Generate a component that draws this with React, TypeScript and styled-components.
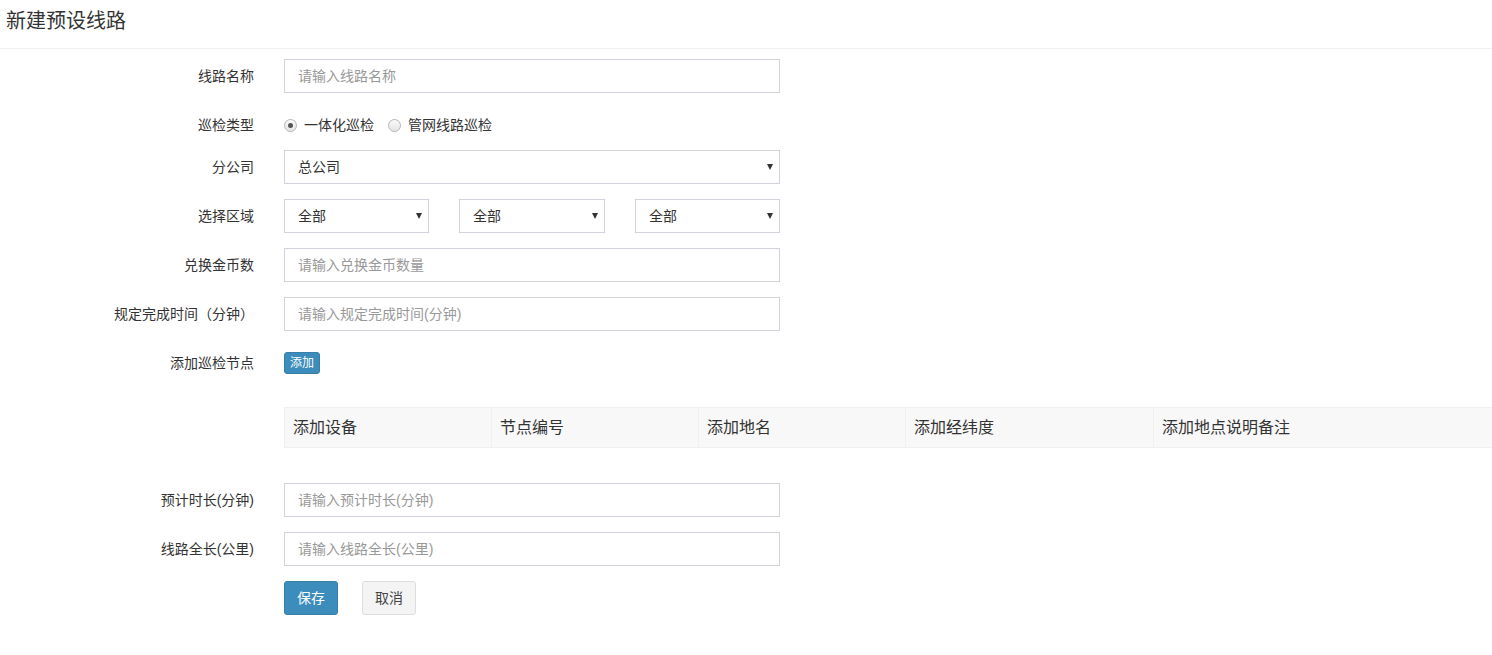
import React from "react";
import styled, { createGlobalStyle } from "styled-components";

const GlobalStyle = createGlobalStyle`
  html, body {
    margin: 0;
    padding: 0;
    background: #fff;
  }
  body {
    font-family: "Liberation Sans", "Noto Sans CJK SC", sans-serif;
    font-size: 14px;
    line-height: 20px;
    color: #333;
  }
  * { box-sizing: border-box; }
`;

const Page = styled.div`
  width: 1492px;
  min-height: 655px;
  background: #fff;
`;

const Header = styled.div`
  height: 49px;
  padding: 7px 6px 0;
  border-bottom: 1px solid #f0f0f0;
`;

const Title = styled.h1`
  margin: 0;
  font-size: 20px;
  font-weight: normal;
  line-height: 28px;
  color: #333;
`;

const Form = styled.form`
  display: flex;
  flex-direction: column;
  padding-top: 10px;
`;

const Group = styled.div`
  display: flex;
  align-items: center;
  height: 34px;
  margin-bottom: 15px;
`;

const RadioRow = styled(Group)`
  height: 27px;
  align-items: flex-end;
`;

const Label = styled.label`
  width: 254px;
  margin-right: 30px;
  text-align: right;
  font-size: 14px;
  line-height: 20px;
  color: #333;
  flex-shrink: 0;
`;

const Control = styled.div`
  width: 496px;
`;

const Input = styled.input`
  display: block;
  width: 100%;
  height: 34px;
  padding: 6px 13px;
  border: 1px solid #d2d2dc;
  border-radius: 0;
  font-family: inherit;
  font-size: 14px;
  color: #555;
  outline: none;
  &::placeholder {
    color: #999;
  }
`;

const SelectWrap = styled.div`
  position: relative;
  width: 100%;
  &::after {
    content: "";
    position: absolute;
    right: 7px;
    top: 14px;
    border-left: 3.5px solid transparent;
    border-right: 3.5px solid transparent;
    border-top: 6px solid #333;
    pointer-events: none;
  }
`;

const Select = styled.select`
  display: block;
  width: 100%;
  height: 34px;
  padding: 0 13px;
  border: 1px solid #d2d2dc;
  border-radius: 0;
  background: #fff;
  font-family: inherit;
  font-size: 14px;
  color: #333;
  appearance: none;
  -webkit-appearance: none;
  outline: none;
`;

const TripleGrid = styled.div`
  display: grid;
  grid-template-columns: 145px 146px 145px;
  column-gap: 30px;
  width: 496px;
`;

const RadioGroup = styled.div`
  display: flex;
  align-items: center;
  height: 20px;
`;

const RadioOption = styled.label`
  display: flex;
  align-items: center;
  font-size: 14px;
  line-height: 20px;
  color: #333;
  margin-right: 14px;
  cursor: pointer;
`;

const RadioCircle = styled.span<{ $checked?: boolean }>`
  position: relative;
  width: 13px;
  height: 13px;
  border-radius: 50%;
  border: 1px solid #b5b5b5;
  background: linear-gradient(#fafafa, #e4e4e4);
  margin-right: 7px;
  flex-shrink: 0;
  &::after {
    content: "";
    display: ${(p) => (p.$checked ? "block" : "none")};
    position: absolute;
    left: 3px;
    top: 3px;
    width: 5px;
    height: 5px;
    border-radius: 50%;
    background: #555;
  }
`;

const Button = styled.button<{ $variant?: "primary" | "default"; $size?: "xs" | "md" }>`
  font-family: inherit;
  cursor: pointer;
  border-radius: 3px;
  border: 1px solid
    ${(p) => (p.$variant === "primary" ? "#367fa9" : "#ddd")};
  background: ${(p) => (p.$variant === "primary" ? "#3c8dbc" : "#f4f4f4")};
  color: ${(p) => (p.$variant === "primary" ? "#fff" : "#444")};
  font-size: ${(p) => (p.$size === "xs" ? "12px" : "14px")};
  height: ${(p) => (p.$size === "xs" ? "22px" : "34px")};
  width: ${(p) => (p.$size === "xs" ? "36px" : "54px")};
  padding: 0;
  line-height: 1;
`;

const ButtonRow = styled.div`
  display: flex;
  gap: 24px;
  margin-left: 284px;
`;

const TableWrap = styled.div`
  margin: 12px 0 35px 284px;
  width: 1208px;
`;

const Table = styled.table`
  width: 100%;
  border-collapse: collapse;
  table-layout: fixed;
`;

const Th = styled.th`
  height: 40px;
  padding: 0 8px;
  background: #f8f8f8;
  border: 1px solid #f0f0f0;
  text-align: left;
  font-size: 16px;
  font-weight: normal;
  color: #333;
`;

const columns = [
  { title: "添加设备", width: 207 },
  { title: "节点编号", width: 207 },
  { title: "添加地名", width: 207 },
  { title: "添加经纬度", width: 248 },
  { title: "添加地点说明备注", width: 339 },
];

export default function App() {
  return (
    <Page>
      <GlobalStyle />
      <Header>
        <Title>新建预设线路</Title>
      </Header>
      <Form onSubmit={(e) => e.preventDefault()}>
        <Group>
          <Label>线路名称</Label>
          <Control>
            <Input placeholder="请输入线路名称" />
          </Control>
        </Group>
        <RadioRow>
          <Label>巡检类型</Label>
          <RadioGroup>
            <RadioOption>
              <RadioCircle $checked />
              一体化巡检
            </RadioOption>
            <RadioOption>
              <RadioCircle />
              管网线路巡检
            </RadioOption>
          </RadioGroup>
        </RadioRow>
        <Group>
          <Label>分公司</Label>
          <Control>
            <SelectWrap>
              <Select defaultValue="总公司">
                <option>总公司</option>
              </Select>
            </SelectWrap>
          </Control>
        </Group>
        <Group>
          <Label>选择区域</Label>
          <TripleGrid>
            {[0, 1, 2].map((i) => (
              <SelectWrap key={i}>
                <Select defaultValue="全部">
                  <option>全部</option>
                </Select>
              </SelectWrap>
            ))}
          </TripleGrid>
        </Group>
        <Group>
          <Label>兑换金币数</Label>
          <Control>
            <Input placeholder="请输入兑换金币数量" />
          </Control>
        </Group>
        <Group>
          <Label>规定完成时间（分钟）</Label>
          <Control>
            <Input placeholder="请输入规定完成时间(分钟)" />
          </Control>
        </Group>
        <Group>
          <Label>添加巡检节点</Label>
          <Button type="button" $variant="primary" $size="xs">
            添加
          </Button>
        </Group>
        <TableWrap>
          <Table>
            <colgroup>
              {columns.map((c) => (
                <col key={c.title} style={{ width: c.width }} />
              ))}
            </colgroup>
            <thead>
              <tr>
                {columns.map((c) => (
                  <Th key={c.title}>{c.title}</Th>
                ))}
              </tr>
            </thead>
          </Table>
        </TableWrap>
        <Group>
          <Label>预计时长(分钟)</Label>
          <Control>
            <Input placeholder="请输入预计时长(分钟)" />
          </Control>
        </Group>
        <Group>
          <Label>线路全长(公里)</Label>
          <Control>
            <Input placeholder="请输入线路全长(公里)" />
          </Control>
        </Group>
        <ButtonRow>
          <Button type="submit" $variant="primary">
            保存
          </Button>
          <Button type="button" $variant="default">
            取消
          </Button>
        </ButtonRow>
      </Form>
    </Page>
  );
}
